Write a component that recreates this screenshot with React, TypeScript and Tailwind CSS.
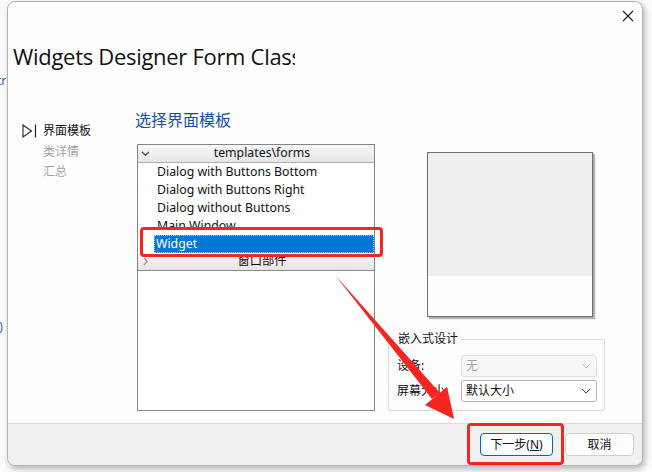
const cjk = "font-['Noto_Sans','Noto_Sans_CJK_SC',sans-serif]";

const Chevron = ({ open }: { open: boolean }) => (
  <svg width="9" height="9" viewBox="0 0 9 9" className="shrink-0">
    {open ? (
      <path d="M1 3 L4.5 6.2 L8 3" fill="none" stroke="#555" strokeWidth="1.4" />
    ) : (
      <path d="M3 1 L6.2 4.5 L3 8" fill="none" stroke="#999" strokeWidth="1.2" />
    )}
  </svg>
);

const ComboArrow = ({ color }: { color: string }) => (
  <svg width="10" height="6" viewBox="0 0 10 6">
    <path d="M1 1 L5 5 L9 1" fill="none" stroke={color} strokeWidth="1" />
  </svg>
);

const items = [
  "Dialog with Buttons Bottom",
  "Dialog with Buttons Right",
  "Dialog without Buttons",
  "Main Window",
];

export default function App() {
  return (
    <div className={`relative w-[652px] h-[472px] overflow-hidden bg-[#fbfbfb] ${cjk}`}>
      {/* background window peeking out on the left */}
      <div className="absolute left-[-3px] top-[72px] text-[12px] text-[#1d5fb8]">tr</div>
      <div className="absolute left-[-4px] top-[318px] text-[12px] text-[#1d5fb8]">:)</div>

      {/* the dialog */}
      <div className="relative ml-[7px] mt-[1px] w-[636px] h-[465px] flex flex-col rounded-[8px] border border-[#b4b4b4] bg-[#fdfdfd] shadow-[2px_3px_6px_rgba(0,0,0,0.28)] overflow-hidden">
        <div className="h-[29px] flex justify-end items-start pt-[8px] pr-[8px]">
          <svg width="12" height="12" viewBox="0 0 12 12">
            <path d="M1 1 L11 11 M11 1 L1 11" stroke="#1a1a1a" strokeWidth="1.1" />
          </svg>
        </div>

        <div className="mt-[10px] ml-[5px] w-[282px] h-[30px] overflow-hidden whitespace-nowrap text-[22px] leading-[30px] text-[#111] font-['Open_Sans',sans-serif] tracking-[-0.3px]">
          Widgets Designer Form Class
        </div>

        <div className="flex mt-[38px] flex-1">
          {/* wizard steps */}
          <div className="w-[127px] pl-[14px] pt-[12px] flex flex-col text-[12px]">
            <div className="h-[20px] flex items-center gap-[6px] text-[#111]">
              <svg width="15" height="14" viewBox="0 0 15 14">
                <path d="M1 1 L9.5 7 L1 13 Z" fill="none" stroke="#222" strokeWidth="1.1" />
                <path d="M13.5 0.5 L13.5 13.5" stroke="#222" strokeWidth="1.2" />
              </svg>
              <span>界面模板</span>
            </div>
            <div className="h-[21px] flex items-center pl-[21px] text-[#a3a3a3]">类详情</div>
            <div className="h-[20px] flex items-center pl-[21px] text-[#a3a3a3]">汇总</div>
          </div>

          {/* page content */}
          <div className="flex flex-col">
            <div className="h-[22px] leading-[22px] text-[16px] text-[#1b4ea3]">选择界面模板</div>
            <div className="flex mt-[13px]">
              <div className="ml-[2px] w-[238px] h-[267px] border border-[#858585] bg-white flex flex-col text-[12.3px] text-[#111]">
                <div className="h-[18px] flex items-center px-[3px] bg-gradient-to-b from-[#f7f7f7] to-[#e6e6e6] border-b border-[#b0b0b0]">
                  <Chevron open />
                  <span className="flex-1 text-center leading-none pl-[3px]">templates\forms</span>
                </div>
                {items.map((t) => (
                  <div key={t} className="h-[18px] flex items-center pl-[19px] leading-none">
                    {t}
                  </div>
                ))}
                <div className="h-[18px] ml-[16px] flex items-center pl-[2px] bg-[#0078d7] text-white leading-none outline outline-1 outline-dotted outline-[#9bc7ee] -outline-offset-1">
                  Widget
                </div>
                <div className="h-[18px] flex items-center px-[3px] bg-gradient-to-b from-[#f7f7f7] to-[#e6e6e6] border-b border-[#8a8a8a]">
                  <Chevron open={false} />
                  <span className="flex-1 text-center leading-none pl-[3px]">窗口部件</span>
                </div>
              </div>

              <div className="ml-[13px] w-[217px] flex flex-col">
                <div className="ml-[39px] mt-[8px] w-[166px] h-[165px] border border-[#6e6e6e] flex flex-col shadow-[2px_2px_1px_rgba(0,0,0,0.3)]">
                  <div className="h-[123px] bg-[#efefef]" />
                  <div className="flex-1 bg-[#fdfdfd]" />
                </div>

                <div className="relative mt-[22px] h-[72px] border border-[#dadada] rounded-[2px] text-[12px] text-[#111]">
                  <div className="absolute left-[6px] top-[-9px] px-[3px] bg-[#fdfdfd] leading-[16px]">嵌入式设计</div>
                  <div className="flex flex-col gap-[3px] pt-[15px] pl-[8px]">
                    <div className="flex items-center">
                      <span className="w-[64px]">设备:</span>
                      <div className="w-[136px] h-[22px] border border-[#dedede] rounded-[3px] bg-[#f7f7f7] flex items-center justify-between pl-[4px] pr-[5px] text-[#a4a4a4]">
                        <span>无</span>
                        <ComboArrow color="#c4c4c4" />
                      </div>
                    </div>
                    <div className="flex items-center">
                      <span className="w-[64px]">屏幕大小:</span>
                      <div className="w-[136px] h-[22px] border border-[#b5b5b5] rounded-[3px] bg-white flex items-center justify-between pl-[4px] pr-[5px]">
                        <span>默认大小</span>
                        <ComboArrow color="#444" />
                      </div>
                    </div>
                  </div>
                </div>
              </div>
            </div>
          </div>
        </div>

        {/* footer */}
        <div className="h-[42px] border-t border-[#dcdcdc] bg-[#f0f0f0] flex justify-end items-start pt-[9px] pr-[8px] gap-[12px] text-[12px] text-[#111]">
          <div className="w-[73px] h-[23px] rounded-[4px] border border-[#0067c0] bg-[#fdfdfd] flex items-center justify-center">
            下一步(<span className="underline">N</span>)
          </div>
          <div className="w-[69px] h-[23px] rounded-[4px] border border-[#d0d0d0] bg-[#fdfdfd] flex items-center justify-center">
            取消
          </div>
        </div>
      </div>

      {/* annotations */}
      <div className="absolute left-[140px] top-[227px] w-[243px] h-[30px] border-[3px] border-[#f5251f] rounded-[4px]" />
      <div className="absolute left-[467px] top-[423px] w-[97px] h-[42px] border-[3px] border-[#f5251f] rounded-[4px]" />
      <svg className="absolute left-0 top-0" width="652" height="472" viewBox="0 0 652 472">
        <polygon points="335,275 440,393 432,399" fill="#f5251f" />
        <polygon points="454,419 447,387 425,405" fill="#f5251f" />
      </svg>
    </div>
  );
}
